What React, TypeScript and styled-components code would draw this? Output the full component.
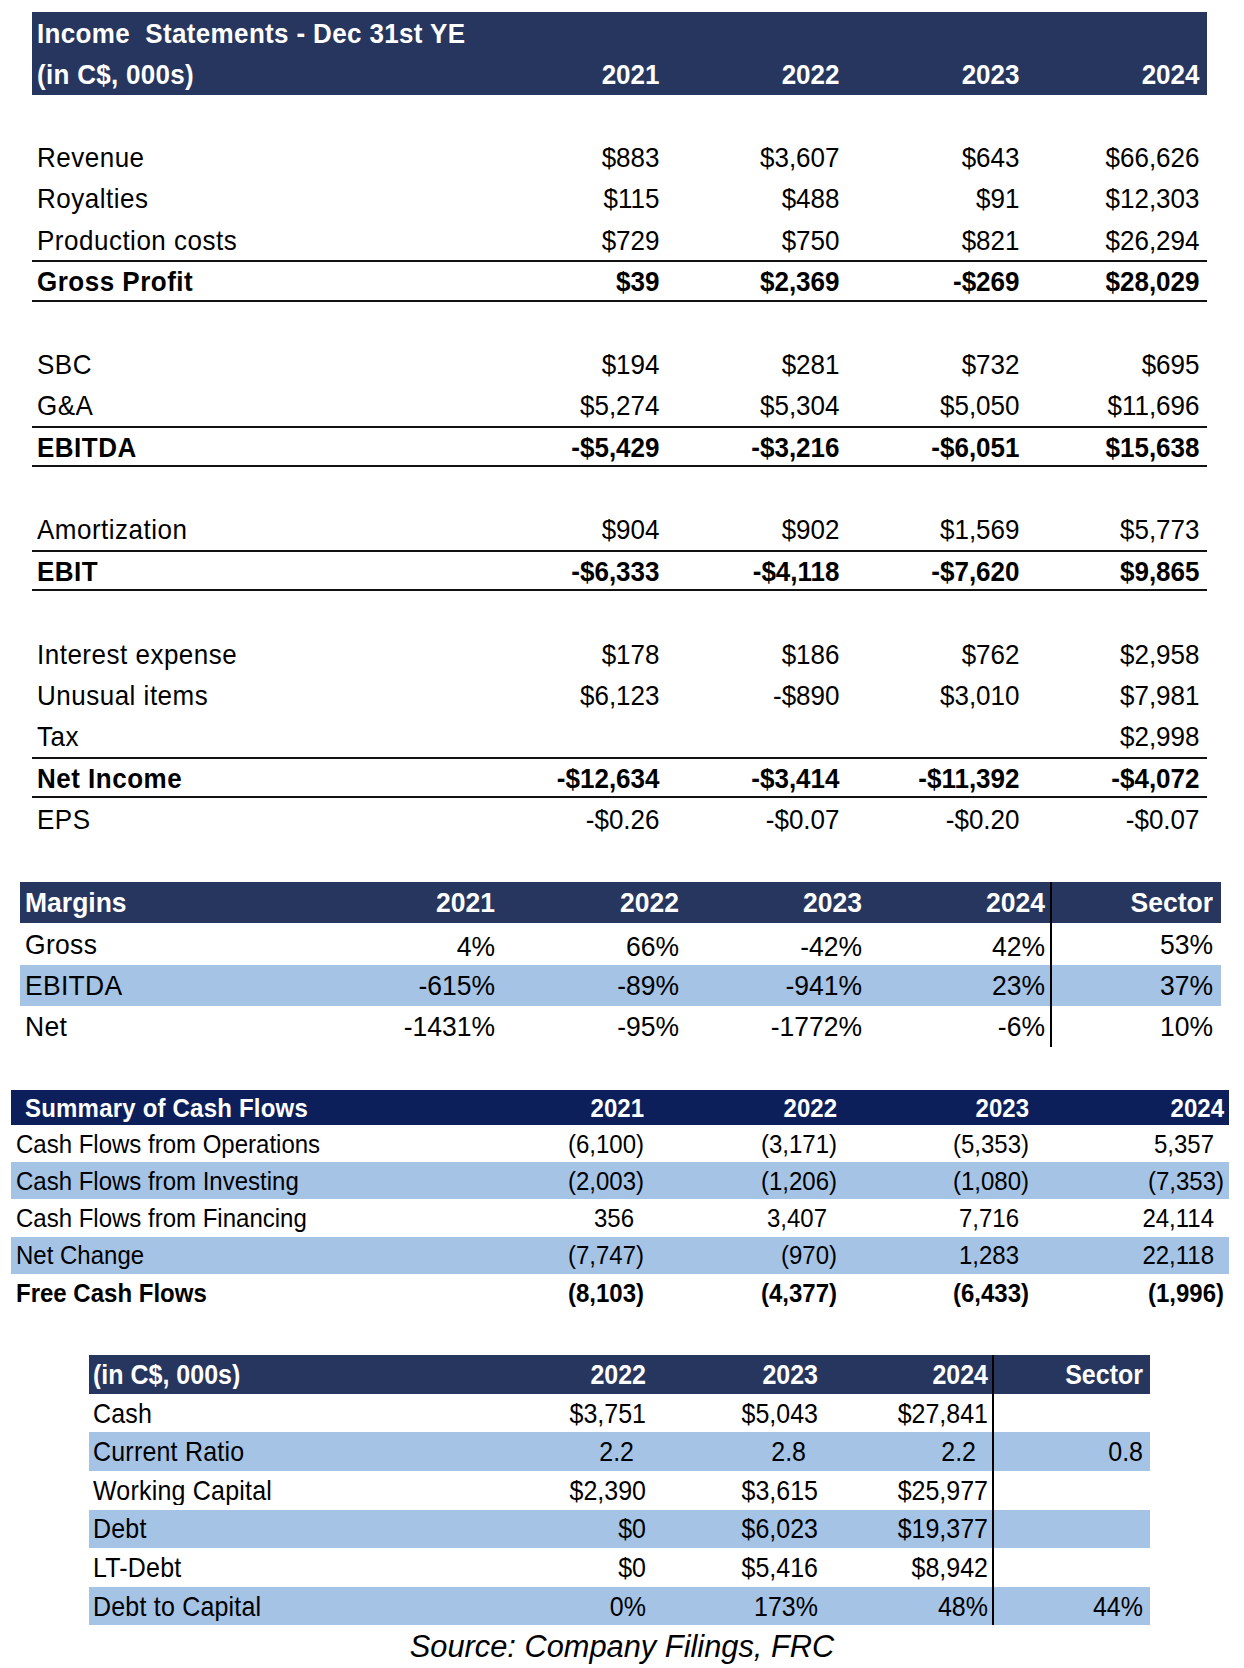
import React from "react";
import styled, { createGlobalStyle } from "styled-components";

const NAVY = "#27365f";
const DEEP_NAVY = "#0c1f5b";
const SHADE = "#a5c3e5";

const GlobalStyle = createGlobalStyle`
  html, body { margin: 0; padding: 0; background: #ffffff; }
  body {
    font-family: "Liberation Sans", Arial, Helvetica, sans-serif;
    color: #000000;
  }
`;

const Page = styled.main`
  width: 1244px;
  min-height: 1668px;
  display: flex;
  flex-direction: column;
  align-items: flex-start;
  padding-top: 12px;
  box-sizing: border-box;
`;

const Table = styled.section<{ $left: number; $width: number; $cols: string; $size: number; $gap: number }>`
  margin: ${(p) => p.$gap}px 0 0 ${(p) => p.$left}px;
  width: ${(p) => p.$width}px;
  display: flex;
  flex-direction: column;
  font-size: ${(p) => p.$size}px;
  line-height: 1;
  --cols: ${(p) => p.$cols};
`;

type RowKind = "head" | "plain" | "shade" | "total" | "strong";

const Row = styled.div<{ $h: number; $kind: RowKind; $head?: string }>`
  display: grid;
  grid-template-columns: var(--cols);
  height: ${(p) => p.$h}px;
  box-sizing: border-box;
  align-items: stretch;
  background: ${(p) => (p.$kind === "head" ? p.$head : p.$kind === "shade" ? SHADE : "transparent")};
  color: ${(p) => (p.$kind === "head" ? "#ffffff" : "#000000")};
  font-weight: ${(p) => (p.$kind === "head" || p.$kind === "total" || p.$kind === "strong" ? 700 : 400)};
  border-top: ${(p) => (p.$kind === "total" ? "2px solid #111" : "none")};
  border-bottom: ${(p) => (p.$kind === "total" ? "2px solid #111" : "none")};
`;

const Cell = styled.div<{ $right?: boolean; $pl?: number; $pr?: number; $divider?: boolean; $span?: boolean }>`
  display: flex;
  align-items: center;
  justify-content: ${(p) => (p.$right ? "flex-end" : "flex-start")};
  padding-left: ${(p) => p.$pl ?? 0}px;
  padding-right: ${(p) => p.$pr ?? 0}px;
  border-right: ${(p) => (p.$divider ? "2px solid #000" : "none")};
  grid-column: ${(p) => (p.$span ? "1 / -1" : "auto")};
  white-space: pre;
  box-sizing: border-box;
`;

/* text run inside a cell: the source sheet renders its type a little taller than Arial */
const Ink = styled.span<{ $trail?: number; $track?: number; $drop?: number }>`
  display: inline-block;
  padding-right: ${(p) => p.$trail ?? 0}px;
  letter-spacing: ${(p) => p.$track ?? 0}px;
  transform: translateY(${(p) => p.$drop ?? 0}px) scaleY(1.07);
`;

const Source = styled.p`
  margin: 4px 0 0 0;
  align-self: center;
  font-style: italic;
  font-size: 30.8px;
  line-height: 36px;
`;

/* ---------- Income statement ---------- */

type IncomeLine = { label?: string; v?: string[]; total?: boolean };

const income: IncomeLine[] = [
  {},
  { label: "Revenue", v: ["$883", "$3,607", "$643", "$66,626"] },
  { label: "Royalties", v: ["$115", "$488", "$91", "$12,303"] },
  { label: "Production costs", v: ["$729", "$750", "$821", "$26,294"] },
  { label: "Gross Profit", v: ["$39", "$2,369", "-$269", "$28,029"], total: true },
  {},
  { label: "SBC", v: ["$194", "$281", "$732", "$695"] },
  { label: "G&A", v: ["$5,274", "$5,304", "$5,050", "$11,696"] },
  { label: "EBITDA", v: ["-$5,429", "-$3,216", "-$6,051", "$15,638"], total: true },
  {},
  { label: "Amortization", v: ["$904", "$902", "$1,569", "$5,773"] },
  { label: "EBIT", v: ["-$6,333", "-$4,118", "-$7,620", "$9,865"], total: true },
  {},
  { label: "Interest expense", v: ["$178", "$186", "$762", "$2,958"] },
  { label: "Unusual items", v: ["$6,123", "-$890", "$3,010", "$7,981"] },
  { label: "Tax", v: ["", "", "", "$2,998"] },
  { label: "Net Income", v: ["-$12,634", "-$3,414", "-$11,392", "-$4,072"], total: true },
  { label: "EPS", v: ["-$0.26", "-$0.07", "-$0.20", "-$0.07"] },
];

const YEARS = ["2021", "2022", "2023", "2024"];
const IS_ROW = 41.4;

function IncomeStatement() {
  return (
    <Table $left={32} $width={1175} $cols="455px 180px 180px 180px 180px" $size={26} $gap={0}>
      <Row $h={IS_ROW} $kind="head" $head={NAVY}>
        <Cell $span $pl={5}>
          <Ink $track={0.35}>{"Income  Statements - Dec 31st YE"}</Ink>
        </Cell>
      </Row>
      <Row $h={IS_ROW} $kind="head" $head={NAVY}>
        <Cell $pl={5}>
          <Ink $track={0.3}>(in C$, 000s)</Ink>
        </Cell>
        {YEARS.map((y) => (
          <Cell key={y} $right $pr={7.5}>
            <Ink>{y}</Ink>
          </Cell>
        ))}
      </Row>
      {income.map((line, i) => (
        <Row key={i} $h={IS_ROW} $kind={line.total ? "total" : "plain"}>
          <Cell $pl={5}>
            <Ink $track={0.5}>{line.label ?? ""}</Ink>
          </Cell>
          {(line.v ?? ["", "", "", ""]).map((val, j) => (
            <Cell key={j} $right $pr={7.5}>
              <Ink>{val}</Ink>
            </Cell>
          ))}
        </Row>
      ))}
    </Table>
  );
}

/* ---------- Margins ---------- */

const margins = [
  { label: "Gross", v: ["4%", "66%", "-42%", "42%"], sector: "53%", shade: false, drop: 2 },
  { label: "EBITDA", v: ["-615%", "-89%", "-941%", "23%"], sector: "37%", shade: true, drop: 0 },
  { label: "Net", v: ["-1431%", "-95%", "-1772%", "-6%"], sector: "10%", shade: false, drop: 0 },
];

function Margins() {
  return (
    <Table $left={20} $width={1201} $cols="299px 183px 184px 183px 183px 169px" $size={26.5} $gap={42}>
      <Row $h={41.4} $kind="head" $head={NAVY}>
        <Cell $pl={5}>
          <Ink>Margins</Ink>
        </Cell>
        {YEARS.map((y, j) => (
          <Cell key={y} $right $pr={j === 3 ? 5 : 7} $divider={j === 3}>
            <Ink>{y}</Ink>
          </Cell>
        ))}
        <Cell $right $pr={8}>
          <Ink>Sector</Ink>
        </Cell>
      </Row>
      {margins.map((m) => (
        <Row key={m.label} $h={41.4} $kind={m.shade ? "shade" : "plain"}>
          <Cell $pl={5}>
            <Ink $track={0.3}>{m.label}</Ink>
          </Cell>
          {m.v.map((val, j) => (
            <Cell key={j} $right $pr={j === 3 ? 5 : 7} $divider={j === 3}>
              <Ink $drop={m.drop}>{val}</Ink>
            </Cell>
          ))}
          <Cell $right $pr={8}>
            <Ink>{m.sector}</Ink>
          </Cell>
        </Row>
      ))}
    </Table>
  );
}

/* ---------- Cash flows ---------- */

const cash = [
  { label: "Cash Flows from Operations", v: ["(6,100)", "(3,171)", "(5,353)", "5,357"], kind: "plain" as RowKind },
  { label: "Cash Flows from Investing", v: ["(2,003)", "(1,206)", "(1,080)", "(7,353)"], kind: "shade" as RowKind },
  { label: "Cash Flows from Financing", v: ["356", "3,407", "7,716", "24,114"], kind: "plain" as RowKind },
  { label: "Net Change", v: ["(7,747)", "(970)", "1,283", "22,118"], kind: "shade" as RowKind },
  { label: "Free Cash Flows", v: ["(8,103)", "(4,377)", "(6,433)", "(1,996)"], kind: "strong" as RowKind },
];

function CashFlows() {
  return (
    <Table $left={11} $width={1218} $cols="448px 190px 193px 192px 195px" $size={24} $gap={43}>
      <Row $h={34.5} $kind="head" $head={DEEP_NAVY}>
        <Cell $pl={14}>
          <Ink $track={0.2}>Summary of Cash Flows</Ink>
        </Cell>
        {YEARS.map((y) => (
          <Cell key={y} $right $pr={5}>
            <Ink>{y}</Ink>
          </Cell>
        ))}
      </Row>
      {cash.map((c) => (
        <Row key={c.label} $h={37.3} $kind={c.kind}>
          <Cell $pl={5}>
            <Ink>{c.label}</Ink>
          </Cell>
          {c.v.map((val, j) => (
            <Cell key={j} $right $pr={5}>
              <Ink $trail={val.startsWith("(") ? 0 : 10}>{val}</Ink>
            </Cell>
          ))}
        </Row>
      ))}
    </Table>
  );
}

/* ---------- Balance sheet ---------- */

const balance = [
  { label: "Cash", v: ["$3,751", "$5,043", "$27,841"], sector: "", shade: false, ratio: false },
  { label: "Current Ratio", v: ["2.2", "2.8", "2.2"], sector: "0.8", shade: true, ratio: true },
  { label: "Working Capital", v: ["$2,390", "$3,615", "$25,977"], sector: "", shade: false, ratio: false },
  { label: "Debt", v: ["$0", "$6,023", "$19,377"], sector: "", shade: true, ratio: false },
  { label: "LT-Debt", v: ["$0", "$5,416", "$8,942"], sector: "", shade: false, ratio: false },
  { label: "Debt to Capital", v: ["0%", "173%", "48%"], sector: "44%", shade: true, ratio: false },
];

const BAL_YEARS = ["2022", "2023", "2024"];

function Balance() {
  return (
    <Table $left={89} $width={1061} $cols="389px 172px 172px 172px 156px" $size={25} $gap={43.5}>
      <Row $h={39} $kind="head" $head={NAVY}>
        <Cell $pl={4}>
          <Ink>(in C$, 000s)</Ink>
        </Cell>
        {BAL_YEARS.map((y, j) => (
          <Cell key={y} $right $pr={4} $divider={j === 2}>
            <Ink>{y}</Ink>
          </Cell>
        ))}
        <Cell $right $pr={7}>
          <Ink>Sector</Ink>
        </Cell>
      </Row>
      {balance.map((b) => (
        <Row key={b.label} $h={38.6} $kind={b.shade ? "shade" : "plain"}>
          <Cell $pl={4}>
            <Ink $track={0.2}>{b.label}</Ink>
          </Cell>
          {b.v.map((val, j) => (
            <Cell key={j} $right $pr={4} $divider={j === 2}>
              <Ink $trail={b.ratio ? 12 : 0}>{val}</Ink>
            </Cell>
          ))}
          <Cell $right $pr={7}>
            <Ink>{b.sector}</Ink>
          </Cell>
        </Row>
      ))}
    </Table>
  );
}

export default function App() {
  return (
    <>
      <GlobalStyle />
      <Page>
        <IncomeStatement />
        <Margins />
        <CashFlows />
        <Balance />
        <Source>Source: Company Filings, FRC</Source>
      </Page>
    </>
  );
}
